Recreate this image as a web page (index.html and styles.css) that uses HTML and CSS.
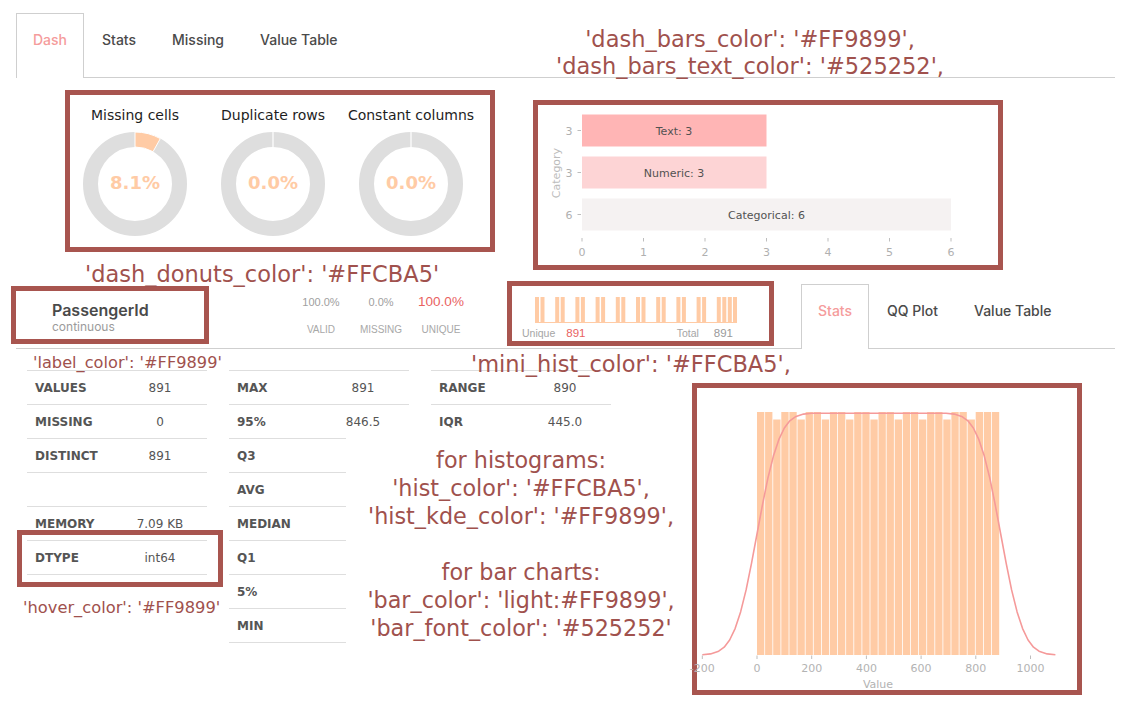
FILE: index.html
```html
<!DOCTYPE html>
<html>
<head>
<meta charset="utf-8">
<title>Dash</title>
<link rel="stylesheet" href="styles.css">
</head>
<body>
<div class="page">
  <nav class="tabs top-tabs">
    <div class="tab active">Dash</div>
    <div class="tab">Stats</div>
    <div class="tab">Missing</div>
    <div class="tab">Value Table</div>
  </nav>

  <section class="dash">
    <div class="donuts box">
      <div class="donut">
        <div class="donut-title">Missing cells</div>
        <svg class="donut-svg" width="104" height="104" viewBox="0 0 104 104">
          <circle cx="52" cy="52" r="44.5" fill="none" stroke="#DEDEDE" stroke-width="15"/>
          <path d="M52,0 A52,52 0 0 1 77.33,6.59 L70.03,19.69 A37,37 0 0 0 52,15 Z" fill="#FFCBA5" stroke="#fff" stroke-width="1"/>
          <text x="52" y="57" text-anchor="middle" class="donut-val">8.1%</text>
        </svg>
      </div>
      <div class="donut">
        <div class="donut-title">Duplicate rows</div>
        <svg class="donut-svg" width="104" height="104" viewBox="0 0 104 104">
          <circle cx="52" cy="52" r="44.5" fill="none" stroke="#DEDEDE" stroke-width="15"/>
          <line x1="52" y1="0" x2="52" y2="15" stroke="#fff" stroke-width="1.2"/>
          <text x="52" y="57" text-anchor="middle" class="donut-val">0.0%</text>
        </svg>
      </div>
      <div class="donut">
        <div class="donut-title">Constant columns</div>
        <svg class="donut-svg" width="104" height="104" viewBox="0 0 104 104">
          <circle cx="52" cy="52" r="44.5" fill="none" stroke="#DEDEDE" stroke-width="15"/>
          <line x1="52" y1="0" x2="52" y2="15" stroke="#fff" stroke-width="1.2"/>
          <text x="52" y="57" text-anchor="middle" class="donut-val">0.0%</text>
        </svg>
      </div>
    </div>

    <div class="bars box">
      <svg class="bar-chart" width="460" height="160" viewBox="0 0 460 160">
        <rect x="44" y="9.5" width="184.5" height="32" fill="#FFB5B5"/>
        <rect x="44" y="51.5" width="184.5" height="32" fill="#FDD4D5"/>
        <rect x="44" y="93.5" width="369" height="32" fill="#F5F2F2"/>
        <g class="bc-label" text-anchor="middle">
          <text x="136" y="29.5">Text: 3</text>
          <text x="136" y="71.5">Numeric: 3</text>
          <text x="228.5" y="113.5">Categorical: 6</text>
        </g>
        <g stroke="#bdbdbd" stroke-width="1">
          <line x1="39.5" y1="25.5" x2="43" y2="25.5"/>
          <line x1="39.5" y1="67.5" x2="43" y2="67.5"/>
          <line x1="39.5" y1="109.5" x2="43" y2="109.5"/>
          <line x1="44" y1="133" x2="44" y2="136.5"/>
          <line x1="105.5" y1="133" x2="105.5" y2="136.5"/>
          <line x1="167" y1="133" x2="167" y2="136.5"/>
          <line x1="228.5" y1="133" x2="228.5" y2="136.5"/>
          <line x1="290" y1="133" x2="290" y2="136.5"/>
          <line x1="351.5" y1="133" x2="351.5" y2="136.5"/>
          <line x1="413" y1="133" x2="413" y2="136.5"/>
        </g>
        <g class="bc-tick" text-anchor="middle">
          <text x="31" y="29.5">3</text>
          <text x="31" y="71.5">3</text>
          <text x="31" y="113.5">6</text>
          <text x="44" y="150.5">0</text>
          <text x="105.5" y="150.5">1</text>
          <text x="167" y="150.5">2</text>
          <text x="228.5" y="150.5">3</text>
          <text x="290" y="150.5">4</text>
          <text x="351.5" y="150.5">5</text>
          <text x="413" y="150.5">6</text>
          <text class="bc-axis" transform="translate(22,68) rotate(-90)">Category</text>
        </g>
      </svg>
    </div>
  </section>

  <section class="var-head">
    <div class="var-name box">
      <div class="name">PassengerId</div>
      <div class="kind">continuous</div>
    </div>
    <div class="quick-stats">
      <div class="qs"><span class="qs-val">100.0%</span><span class="qs-lab">VALID</span></div>
      <div class="qs"><span class="qs-val">0.0%</span><span class="qs-lab">MISSING</span></div>
      <div class="qs"><span class="qs-val red">100.0%</span><span class="qs-lab">UNIQUE</span></div>
    </div>
    <div class="mini-hist box">
      <svg class="mini-bars" width="257" height="26" viewBox="0 0 257 26">
        <line x1="23" y1="25.5" x2="225" y2="25.5" stroke="#FFCBA5" stroke-width="1"/>
        <g fill="#FFCBA5">
          <rect x="23" y="0" width="4" height="26"/><rect x="28.5" y="0" width="4" height="26"/>
          <rect x="43.2" y="0" width="4" height="26"/><rect x="48.7" y="0" width="4" height="26"/>
          <rect x="63.4" y="0" width="4" height="26"/><rect x="68.9" y="0" width="4" height="26"/>
          <rect x="83.6" y="0" width="4" height="26"/><rect x="89.1" y="0" width="4" height="26"/>
          <rect x="103.8" y="0" width="4" height="26"/><rect x="109.3" y="0" width="4" height="26"/>
          <rect x="124" y="0" width="4" height="26"/><rect x="129.5" y="0" width="4" height="26"/>
          <rect x="144.2" y="0" width="4" height="26"/><rect x="149.7" y="0" width="4" height="26"/>
          <rect x="164.4" y="0" width="4" height="26"/><rect x="169.9" y="0" width="4" height="26"/>
          <rect x="184.6" y="0" width="4" height="26"/><rect x="190.1" y="0" width="4" height="26"/>
          <rect x="204.8" y="0" width="4" height="26"/><rect x="210.3" y="0" width="4" height="26"/>
          <rect x="215.8" y="0" width="4" height="26"/><rect x="221" y="0" width="4" height="26"/>
        </g>
      </svg>
      <div class="mini-labels">
        <span class="ml-group"><span class="ml">Unique</span><span class="mv red">891</span></span>
        <span class="ml-group wide"><span class="ml">Total</span><span class="mv">891</span></span>
      </div>
    </div>
    <nav class="tabs sub-tabs">
      <div class="tab active">Stats</div>
      <div class="tab">QQ Plot</div>
      <div class="tab">Value Table</div>
    </nav>
  </section>

  <section class="var-body">
    <div class="stat-table t1">
      <div class="row"><span class="k">VALUES</span><span class="v">891</span></div>
      <div class="row"><span class="k">MISSING</span><span class="v">0</span></div>
      <div class="row"><span class="k">DISTINCT</span><span class="v">891</span></div>
      <div class="row"><span class="k"></span><span class="v"></span></div>
      <div class="row"><span class="k">MEMORY</span><span class="v">7.09 KB</span></div>
      <div class="row"><span class="k">DTYPE</span><span class="v">int64</span></div>
    </div>
    <div class="stat-table t2">
      <div class="row wide"><span class="k">MAX</span><span class="v">891</span></div>
      <div class="row"><span class="k">95%</span><span class="v">846.5</span></div>
      <div class="row"><span class="k">Q3</span><span class="v"></span></div>
      <div class="row"><span class="k">AVG</span><span class="v"></span></div>
      <div class="row"><span class="k">MEDIAN</span><span class="v"></span></div>
      <div class="row"><span class="k">Q1</span><span class="v"></span></div>
      <div class="row"><span class="k">5%</span><span class="v"></span></div>
      <div class="row"><span class="k">MIN</span><span class="v"></span></div>
    </div>
    <div class="col3">
      <div class="stat-table t3">
        <div class="row"><span class="k">RANGE</span><span class="v">890</span></div>
        <div class="row last"><span class="k">IQR</span><span class="v">445.0</span></div>
      </div>
      <div class="note-flow">for histograms:<br>'hist_color': '#FFCBA5',<br>'hist_kde_color': '#FF9899',<br>&nbsp;<br>for bar charts:<br>'bar_color': 'light:#FF9899',<br>'bar_font_color': '#525252'</div>
    </div>
    <div class="hist box">
      <svg class="hist-svg" width="380" height="302" viewBox="0 0 380 302">
        <g fill="#FFCBA5">
          <rect x="60" y="24" width="7.3" height="243"/>
          <rect x="68.1" y="24" width="7.3" height="243"/>
          <rect x="76.2" y="31.5" width="7.3" height="235.5"/>
          <rect x="84.3" y="24" width="7.3" height="243"/>
          <rect x="92.4" y="24" width="7.3" height="243"/>
          <rect x="100.5" y="31.5" width="7.3" height="235.5"/>
          <rect x="108.6" y="24" width="7.3" height="243"/>
          <rect x="116.7" y="24" width="7.3" height="243"/>
          <rect x="124.8" y="31.5" width="7.3" height="235.5"/>
          <rect x="132.9" y="24" width="7.3" height="243"/>
          <rect x="141" y="24" width="7.3" height="243"/>
          <rect x="149.1" y="31.5" width="7.3" height="235.5"/>
          <rect x="157.2" y="24" width="7.3" height="243"/>
          <rect x="165.3" y="24" width="7.3" height="243"/>
          <rect x="173.4" y="31.5" width="7.3" height="235.5"/>
          <rect x="181.5" y="24" width="7.3" height="243"/>
          <rect x="189.6" y="24" width="7.3" height="243"/>
          <rect x="197.7" y="31.5" width="7.3" height="235.5"/>
          <rect x="205.8" y="24" width="7.3" height="243"/>
          <rect x="213.9" y="24" width="7.3" height="243"/>
          <rect x="222" y="31.5" width="7.3" height="235.5"/>
          <rect x="230.1" y="24" width="7.3" height="243"/>
          <rect x="238.2" y="24" width="7.3" height="243"/>
          <rect x="246.3" y="31.5" width="7.3" height="235.5"/>
          <rect x="254.4" y="24" width="7.3" height="243"/>
          <rect x="262.5" y="24" width="7.3" height="243"/>
          <rect x="270.6" y="31.5" width="7.3" height="235.5"/>
          <rect x="278.7" y="24" width="7.3" height="243"/>
          <rect x="286.8" y="24" width="7.3" height="243"/>
          <rect x="294.9" y="24" width="7.3" height="243"/>
        </g>
        <path d="M5.3,266.8 L13.5,265.9 L21.7,263.2 L27.2,259.2 L32.65,252 L38.1,240.6 L43.6,223.9 L49.1,201.9 L54.5,175.3 L60,146 L65.5,116.7 L70.9,90.1 L76.4,68.1 L81.9,51.4 L87.35,40 L92.8,32.8 L98.3,28.8 L106.5,26.1 L114.7,25.2 L249,25.2 L257.2,26.1 L265.4,28.8 L270.9,32.8 L276.35,40 L281.8,51.4 L287.3,68.1 L292.8,90.1 L298.2,116.7 L303.7,146 L309.2,175.3 L314.6,201.9 L320.1,223.9 L325.6,240.6 L331.05,252 L336.5,259.2 L342,263.2 L350.2,265.9 L358.4,266.8" fill="none" stroke="#F59A9A" stroke-width="1.6" stroke-linejoin="round"/>
        <g stroke="#bdbdbd" stroke-width="1">
          <line x1="5.3" y1="267.5" x2="5.3" y2="271"/>
          <line x1="60" y1="267.5" x2="60" y2="271"/>
          <line x1="114.7" y1="267.5" x2="114.7" y2="271"/>
          <line x1="169.4" y1="267.5" x2="169.4" y2="271"/>
          <line x1="224.1" y1="267.5" x2="224.1" y2="271"/>
          <line x1="278.8" y1="267.5" x2="278.8" y2="271"/>
          <line x1="333.5" y1="267.5" x2="333.5" y2="271"/>
        </g>
        <g class="h-tick" text-anchor="middle">
          <text x="5.3" y="284">-200</text>
          <text x="60" y="284">0</text>
          <text x="114.7" y="284">200</text>
          <text x="169.4" y="284">400</text>
          <text x="224.1" y="284">600</text>
          <text x="278.8" y="284">800</text>
          <text x="333.5" y="284">1000</text>
          <text x="181" y="300">Value</text>
        </g>
      </svg>
    </div>
  </section>

  <div class="note note-top">'dash_bars_color': '#FF9899',<br>'dash_bars_text_color': '#525252',</div>
  <div class="note note-donuts">'dash_donuts_color': '#FFCBA5'</div>
  <div class="note note-label">'label_color': '#FF9899'</div>
  <div class="note note-mini">'mini_hist_color': '#FFCBA5',</div>
  <div class="note note-hover">'hover_color': '#FF9899'</div>
  <div class="hover-box"></div>
</div>
</body>
</html>
```

FILE: styles.css
```css
* { box-sizing: border-box; }

body {
  margin: 0;
  background: #ffffff;
}

.page {
  position: relative;
  width: 1132px;
  height: 709px;
  overflow: hidden;
  font-family: Inter, "Liberation Sans", sans-serif;
  color: #4a4a4a;
}

/* ---------- tabs ---------- */
.tabs { display: flex; }

.top-tabs {
  margin: 13px 17px 0 16px;
  height: 65px;
  border-bottom: 1px solid #cfcfcf;
}

.tab {
  height: 65px;
  padding: 18px 17px 0;
  border: 1px solid transparent;
  border-bottom: 0;
  font-size: 14px;
  line-height: 16px;
  font-weight: 500;
  color: #4a4a4a;
  white-space: nowrap;
}

.tab.active {
  padding: 18px 16px 0;
  border-color: #cfcfcf;
  background: #ffffff;
  color: #F59C9C;
}

/* ---------- annotation boxes ---------- */
.box {
  border: 5px solid #A8554F;
  background: #ffffff;
}

/* ---------- dashboard ---------- */
.dash {
  display: flex;
  align-items: flex-start;
  margin-top: 12px;
}

.donuts {
  margin-left: 65px;
  width: 430px;
  height: 162px;
  display: flex;
  gap: 34px;
  padding: 12px 0 0 13px;
}

.donut {
  width: 104px;
  display: flex;
  flex-direction: column;
  align-items: center;
}

.donut-title {
  font-family: "DejaVu Sans", sans-serif;
  font-size: 14px;
  line-height: 16px;
  color: #1e1e1e;
  white-space: nowrap;
}

.donut-svg {
  display: block;
  margin-top: 9px;
}

.donut-val {
  font-family: "DejaVu Sans", sans-serif;
  font-weight: bold;
  font-size: 18px;
  fill: #FFCBA5;
}

.bars {
  margin: 10px 0 0 38px;
  width: 470px;
  height: 170px;
}

.bar-chart { display: block; }

.bc-label text {
  font-family: "DejaVu Sans", sans-serif;
  font-size: 11px;
  fill: #525252;
}

.bc-tick text {
  font-family: "DejaVu Sans", sans-serif;
  font-size: 11px;
  fill: #b0b0b0;
}

.bc-tick .bc-axis { fill: #bcbcbc; }

/* ---------- variable header ---------- */
.var-head {
  display: flex;
  align-items: flex-start;
  margin: 11px 17px 0 16px;
  height: 68px;
  border-bottom: 1px solid #cfcfcf;
}

.var-name {
  margin: 5px 0 0 -5px;
  width: 198px;
  height: 58px;
  padding: 11px 0 0 36px;
}

.name {
  font-size: 16px;
  line-height: 16px;
  font-weight: 600;
  color: #4a4a4a;
}

.kind {
  margin-top: 3px;
  font-size: 12px;
  line-height: 12px;
  color: #9b9b9b;
}

.quick-stats {
  margin: 14px 0 0 82px;
  display: grid;
  grid-template-columns: repeat(3, 60px);
  font-family: "Liberation Sans", Arial, sans-serif;
}

.qs {
  display: flex;
  flex-direction: column;
  align-items: center;
}

.qs-val {
  font-size: 11px;
  line-height: 14px;
  color: #a0a0a0;
}

.qs-val.red {
  font-size: 13.5px;
  color: #E9625F;
}

.qs-lab {
  margin-top: 14.5px;
  font-size: 10px;
  line-height: 12px;
  color: #a8a8a8;
}

.mini-hist {
  margin-left: 36px;
  width: 267px;
  height: 65px;
  padding-top: 11px;
}

.mini-bars { display: block; }

.mini-labels {
  display: flex;
  justify-content: space-between;
  margin-top: 4px;
  padding: 0 36px 0 10px;
  line-height: 13px;
  font-family: "Liberation Sans", Arial, sans-serif;
}

.ml-group {
  display: flex;
  align-items: baseline;
  gap: 11px;
}

.ml-group.wide { gap: 15px; }

.ml {
  font-size: 10.5px;
  color: #a5a5a5;
}

.mv {
  font-size: 11.5px;
  color: #9a9a9a;
}

.mv.red { color: #E9625F; }

.sub-tabs { margin: 3px 0 0 27px; }

/* ---------- variable body ---------- */
.var-body {
  display: flex;
  align-items: flex-start;
  margin: 21px 0 0 27px;
}

.stat-table {
  width: 180px;
  border-top: 1px solid #dedede;
  font-family: "DejaVu Sans", sans-serif;
  font-size: 12px;
  color: #555555;
}

.row {
  display: grid;
  grid-template-columns: 93px 80px;
  align-items: center;
  height: 34px;
  border-bottom: 1px solid #dedede;
}

.row .k {
  font-weight: bold;
  padding-left: 8px;
  white-space: nowrap;
}

.row .v {
  text-align: center;
  white-space: nowrap;
}

.t2 { margin-left: 22px; }

.t2 .row {
  grid-template-columns: 94px 80px;
  width: 117px;
}

.t2 .row.wide { width: 180px; }

.t3 .row { grid-template-columns: 94px 80px; }

.t3 .row.last { border-bottom: 0; }

.col3 {
  margin-left: 22px;
  width: 180px;
  display: flex;
  flex-direction: column;
  align-items: center;
}

.col3 .t3 { align-self: stretch; }

.note-flow {
  margin-top: 6.5px;
  text-align: center;
  white-space: nowrap;
  font-family: "DejaVu Sans", sans-serif;
  font-size: 22.3px;
  line-height: 28px;
  color: #A0514D;
}

.hist {
  margin: 13px 0 0 81px;
  width: 390px;
  height: 312px;
}

.hist-svg {
  display: block;
  overflow: visible;
}

.h-tick text {
  font-family: "DejaVu Sans", sans-serif;
  font-size: 11px;
  fill: #b3b3b3;
}

/* ---------- callout notes ---------- */
.note {
  position: absolute;
  font-family: "DejaVu Sans", sans-serif;
  color: #A0514D;
  white-space: nowrap;
}

.note-top {
  left: 500px;
  top: 26px;
  width: 500px;
  text-align: center;
  font-size: 22.5px;
  line-height: 26.5px;
}

.note-donuts {
  left: 85px;
  top: 261px;
  font-size: 22.5px;
  line-height: 26.5px;
}

.note-label {
  left: 33px;
  top: 353px;
  font-size: 16.2px;
  line-height: 20px;
}

.note-mini {
  left: 471px;
  top: 351px;
  font-size: 22.5px;
  line-height: 26.5px;
}

.note-hover {
  left: 23px;
  top: 598px;
  font-size: 16.3px;
  line-height: 20px;
}

.hover-box {
  position: absolute;
  left: 17px;
  top: 530px;
  width: 206px;
  height: 57px;
  border: 5px solid #A8554F;
}
```
